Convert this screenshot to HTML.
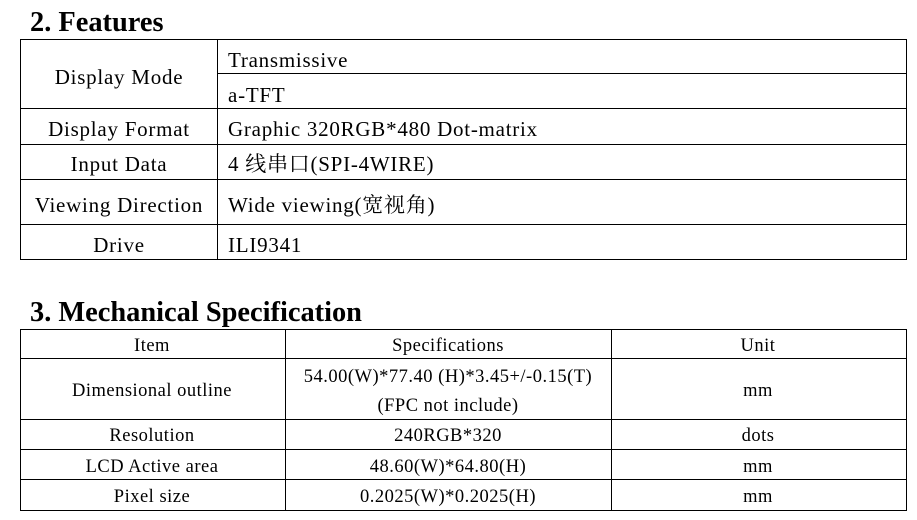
<!DOCTYPE html>
<html><head><meta charset="utf-8"><style>
body{margin:0;width:917px;height:520px;background:#fff;position:relative;font-family:"Liberation Serif","Noto Serif CJK SC",serif;color:#000;overflow:hidden}
.a{position:absolute;white-space:nowrap}
.h{position:absolute;background:#000;height:1px}
.v{position:absolute;background:#000;width:1px}
.t1{font-size:21px;line-height:20px;letter-spacing:0.75px}
.t2{font-size:18.5px;line-height:18px;letter-spacing:0.5px;margin-top:2px}
.c{transform:translateX(-50%)}
h1{position:absolute;margin:0;font-size:28.4px;font-weight:bold;line-height:26px;left:30px}
</style></head><body>
<h1 style="top:10px">2. Features</h1>
<div class="h" style="left:20px;width:887px;top:39px"></div>
<div class="h" style="left:217px;width:690px;top:73px"></div>
<div class="h" style="left:20px;width:887px;top:108px"></div>
<div class="h" style="left:20px;width:887px;top:144px"></div>
<div class="h" style="left:20px;width:887px;top:179px"></div>
<div class="h" style="left:20px;width:887px;top:224px"></div>
<div class="h" style="left:20px;width:887px;top:259px"></div>
<div class="v" style="left:20px;top:39px;height:221px"></div>
<div class="v" style="left:217px;top:39px;height:221px"></div>
<div class="v" style="left:906px;top:39px;height:221px"></div>
<div class="a t1 c" style="left:119px;top:67px">Display Mode</div>
<div class="a t1" style="left:228px;top:50px">Transmissive</div>
<div class="a t1" style="left:228px;top:85px">a-TFT</div>
<div class="a t1 c" style="left:119px;top:119px">Display Format</div>
<div class="a t1" style="left:228px;top:119px">Graphic 320RGB*480 Dot-matrix</div>
<div class="a t1 c" style="left:119px;top:154px">Input Data</div>
<div class="a t1" style="left:228px;top:154px">4 线串口(SPI-4WIRE)</div>
<div class="a t1 c" style="left:119px;top:195px">Viewing Direction</div>
<div class="a t1" style="left:228px;top:195px">Wide viewing(宽视角)</div>
<div class="a t1 c" style="left:119px;top:235px">Drive</div>
<div class="a t1" style="left:228px;top:235px">ILI9341</div>

<h1 style="top:300px">3. Mechanical Specification</h1>
<div class="h" style="left:20px;width:887px;top:329px"></div>
<div class="h" style="left:20px;width:887px;top:358px"></div>
<div class="h" style="left:20px;width:887px;top:419px"></div>
<div class="h" style="left:20px;width:887px;top:449px"></div>
<div class="h" style="left:20px;width:887px;top:479px"></div>
<div class="h" style="left:20px;width:887px;top:510px"></div>
<div class="v" style="left:20px;top:329px;height:182px"></div>
<div class="v" style="left:285px;top:329px;height:182px"></div>
<div class="v" style="left:611px;top:329px;height:182px"></div>
<div class="v" style="left:906px;top:329px;height:182px"></div>
<div class="a t2 c" style="left:152px;top:335px">Item</div>
<div class="a t2 c" style="left:448px;top:335px">Specifications</div>
<div class="a t2 c" style="left:758px;top:335px">Unit</div>
<div class="a t2 c" style="left:152px;top:380px">Dimensional outline</div>
<div class="a t2 c" style="left:448px;top:366px">54.00(W)*77.40 (H)*3.45+/-0.15(T)</div>
<div class="a t2 c" style="left:448px;top:395px">(FPC not include)</div>
<div class="a t2 c" style="left:758px;top:380px">mm</div>
<div class="a t2 c" style="left:152px;top:425px">Resolution</div>
<div class="a t2 c" style="left:448px;top:425px">240RGB*320</div>
<div class="a t2 c" style="left:758px;top:425px">dots</div>
<div class="a t2 c" style="left:152px;top:456px">LCD Active area</div>
<div class="a t2 c" style="left:448px;top:456px">48.60(W)*64.80(H)</div>
<div class="a t2 c" style="left:758px;top:456px">mm</div>
<div class="a t2 c" style="left:152px;top:486px">Pixel size</div>
<div class="a t2 c" style="left:448px;top:486px">0.2025(W)*0.2025(H)</div>
<div class="a t2 c" style="left:758px;top:486px">mm</div>
</body></html>
